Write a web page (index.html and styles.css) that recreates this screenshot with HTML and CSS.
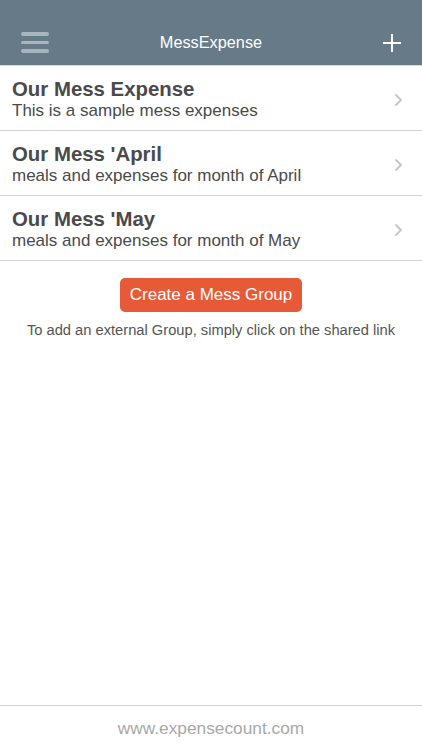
FILE: index.html
```html
<!DOCTYPE html>
<html lang="en">
<head>
<meta charset="utf-8">
<title>MessExpense</title>
<link rel="stylesheet" href="styles.css">
</head>
<body>
<div class="app">
  <header class="topbar">
    <button class="icon-btn menu" aria-label="Menu">
      <span class="bar"></span><span class="bar"></span><span class="bar"></span>
    </button>
    <h1 class="title">MessExpense</h1>
    <button class="icon-btn add" aria-label="Add">
      <svg width="20" height="20" viewBox="0 0 20 20"><path d="M10 1V19M1 10H19" stroke="#fff" stroke-width="2" fill="none"/></svg>
    </button>
  </header>
  <main class="content">
    <ul class="groups">
      <li class="group">
        <div class="group-text">
          <div class="group-name">Our Mess Expense</div>
          <div class="group-desc">This is a sample mess expenses</div>
        </div>
        <svg class="chev" width="9" height="14" viewBox="0 0 9 14"><path d="M1.5 1.5L7 7L1.5 12.5" stroke="#c4c4c8" stroke-width="1.8" fill="none"/></svg>
      </li>
      <li class="group">
        <div class="group-text">
          <div class="group-name">Our Mess 'April</div>
          <div class="group-desc">meals and expenses for month of April</div>
        </div>
        <svg class="chev" width="9" height="14" viewBox="0 0 9 14"><path d="M1.5 1.5L7 7L1.5 12.5" stroke="#c4c4c8" stroke-width="1.8" fill="none"/></svg>
      </li>
      <li class="group">
        <div class="group-text">
          <div class="group-name">Our Mess 'May</div>
          <div class="group-desc">meals and expenses for month of May</div>
        </div>
        <svg class="chev" width="9" height="14" viewBox="0 0 9 14"><path d="M1.5 1.5L7 7L1.5 12.5" stroke="#c4c4c8" stroke-width="1.8" fill="none"/></svg>
      </li>
    </ul>
    <div class="actions">
      <button class="create-btn">Create a Mess Group</button>
      <p class="hint">To add an external Group, simply click on the shared link</p>
    </div>
  </main>
  <footer class="footer">www.expensecount.com</footer>
</div>
</body>
</html>
```
FILE: styles.css
```css
* { box-sizing: border-box; }
html, body { margin: 0; padding: 0; }
body {
  font-family: "Liberation Sans", Arial, sans-serif;
  background: #fff;
  color: #4a4a4a;
}
.app {
  height: 750px;
  display: flex;
  flex-direction: column;
}
.topbar {
  height: 66px;
  padding-top: 20px;
  background: #667a88;
  border-bottom: 1px solid #d6dadd;
  display: flex;
  align-items: center;
  justify-content: space-between;
}
.icon-btn {
  background: none;
  border: 0;
  padding: 0;
  width: 70px;
  height: 45px;
  display: flex;
  align-items: center;
  cursor: pointer;
}
.menu {
  flex-direction: column;
  justify-content: center;
  align-items: flex-start;
  padding-left: 21px;
  gap: 5px;
}
.bar {
  display: block;
  width: 28px;
  height: 3.5px;
  border-radius: 2px;
  background: #a9b5be;
}
.add {
  justify-content: flex-end;
  padding-right: 20px;
}
.title {
  margin: 0;
  font-size: 16.3px;
  font-weight: normal;
  color: #fff;
}
.content { flex: 1; }
.groups {
  list-style: none;
  margin: 0;
  padding: 0;
}
.group {
  display: flex;
  align-items: center;
  padding: 12px 19px 8px 12px;
  border-bottom: 1px solid #d2d2d2;
}
.group-text { flex: 1; }
.group-name {
  font-size: 20.4px;
  font-weight: bold;
  line-height: 22px;
  color: #4a4a4a;
}
.group-desc {
  font-size: 17px;
  line-height: 22px;
  color: #4a4a4a;
}
.chev { margin-top: 0; }
.actions {
  display: flex;
  flex-direction: column;
  align-items: center;
  padding-top: 17px;
}
.create-btn {
  font-family: inherit;
  font-size: 17px;
  color: #fff;
  background: #e65a38;
  border: 0;
  border-radius: 5px;
  height: 34px;
  padding: 0 10px;
}
.hint {
  margin: 10px 0 0;
  font-size: 14.7px;
  line-height: 17px;
  color: #555;
}
.footer {
  height: 45px;
  border-top: 1px solid #d2d2d2;
  display: flex;
  align-items: center;
  justify-content: center;
  font-size: 17.3px;
  color: #a8a8a8;
}
```
